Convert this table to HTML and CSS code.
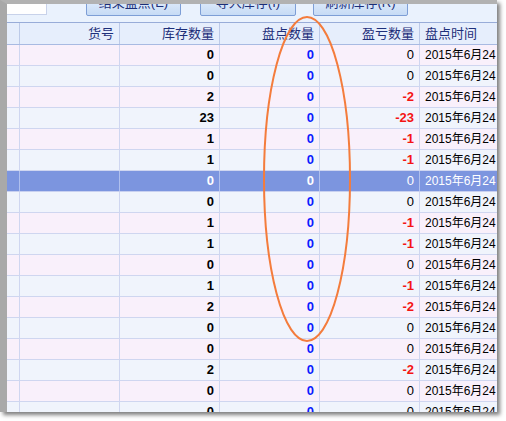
FILE: index.html
```html
<!DOCTYPE html>
<html>
<head>
<meta charset="utf-8">
<link rel="stylesheet" href="styles.css">
</head>
<body>
<div class="screen">
  <div class="win">
    <div class="toolbar">
      <div class="search"></div>
      <div class="btn b1">结束盘点(E)</div>
      <div class="btn b2">导入库存(I)</div>
      <div class="btn b3">刷新库存(R)</div>
    </div>
    <div class="grid">
      <div class="row head">
        <div class="c"></div>
        <div class="c r">货号</div>
        <div class="c r">库存数量</div>
        <div class="c r">盘点数量</div>
        <div class="c r">盈亏数量</div>
        <div class="c l">盘点时间</div>
      </div>
      <div class="row a"><div class="c"></div><div class="c"></div><div class="c r stock">0</div><div class="c r count">0</div><div class="c r diff">0</div><div class="c l date">2015年6月24日 10:12</div></div>
      <div class="row b"><div class="c"></div><div class="c"></div><div class="c r stock">0</div><div class="c r count">0</div><div class="c r diff">0</div><div class="c l date">2015年6月24日 10:12</div></div>
      <div class="row a"><div class="c"></div><div class="c"></div><div class="c r stock">2</div><div class="c r count">0</div><div class="c r diff neg">-2</div><div class="c l date">2015年6月24日 10:12</div></div>
      <div class="row b"><div class="c"></div><div class="c"></div><div class="c r stock">23</div><div class="c r count">0</div><div class="c r diff neg">-23</div><div class="c l date">2015年6月24日 10:12</div></div>
      <div class="row a"><div class="c"></div><div class="c"></div><div class="c r stock">1</div><div class="c r count">0</div><div class="c r diff neg">-1</div><div class="c l date">2015年6月24日 10:12</div></div>
      <div class="row b"><div class="c"></div><div class="c"></div><div class="c r stock">1</div><div class="c r count">0</div><div class="c r diff neg">-1</div><div class="c l date">2015年6月24日 10:12</div></div>
      <div class="row sel"><div class="c"></div><div class="c"></div><div class="c r stock">0</div><div class="c r count">0</div><div class="c r diff">0</div><div class="c l date">2015年6月24日 10:12</div></div>
      <div class="row b"><div class="c"></div><div class="c"></div><div class="c r stock">0</div><div class="c r count">0</div><div class="c r diff">0</div><div class="c l date">2015年6月24日 10:12</div></div>
      <div class="row a"><div class="c"></div><div class="c"></div><div class="c r stock">1</div><div class="c r count">0</div><div class="c r diff neg">-1</div><div class="c l date">2015年6月24日 10:12</div></div>
      <div class="row b"><div class="c"></div><div class="c"></div><div class="c r stock">1</div><div class="c r count">0</div><div class="c r diff neg">-1</div><div class="c l date">2015年6月24日 10:12</div></div>
      <div class="row a"><div class="c"></div><div class="c"></div><div class="c r stock">0</div><div class="c r count">0</div><div class="c r diff">0</div><div class="c l date">2015年6月24日 10:12</div></div>
      <div class="row b"><div class="c"></div><div class="c"></div><div class="c r stock">1</div><div class="c r count">0</div><div class="c r diff neg">-1</div><div class="c l date">2015年6月24日 10:12</div></div>
      <div class="row a"><div class="c"></div><div class="c"></div><div class="c r stock">2</div><div class="c r count">0</div><div class="c r diff neg">-2</div><div class="c l date">2015年6月24日 10:12</div></div>
      <div class="row b"><div class="c"></div><div class="c"></div><div class="c r stock">0</div><div class="c r count">0</div><div class="c r diff">0</div><div class="c l date">2015年6月24日 10:12</div></div>
      <div class="row a"><div class="c"></div><div class="c"></div><div class="c r stock">0</div><div class="c r count">0</div><div class="c r diff">0</div><div class="c l date">2015年6月24日 10:12</div></div>
      <div class="row b"><div class="c"></div><div class="c"></div><div class="c r stock">2</div><div class="c r count">0</div><div class="c r diff neg">-2</div><div class="c l date">2015年6月24日 10:12</div></div>
      <div class="row a"><div class="c"></div><div class="c"></div><div class="c r stock">0</div><div class="c r count">0</div><div class="c r diff">0</div><div class="c l date">2015年6月24日 10:12</div></div>
      <div class="row b"><div class="c"></div><div class="c"></div><div class="c r stock">0</div><div class="c r count">0</div><div class="c r diff">0</div><div class="c l date">2015年6月24日 10:12</div></div>
    </div>
    <svg class="mark" width="490" height="408" viewBox="0 0 490 408">
      <ellipse cx="300" cy="175" rx="43" ry="162" fill="none" stroke="#f47c3c" stroke-width="2"/>
    </svg>
  </div>
</div>
</body>
</html>
```

FILE: styles.css
```css
html, body {
  margin: 0;
  padding: 0;
  background: #ffffff;
}
body {
  width: 506px;
  height: 421px;
  overflow: hidden;
}
.screen {
  width: 490px;
  height: 408px;
  border-top: 4px solid #b2b2b2;
  border-left: 7px solid #a9a9a9;
  box-shadow: 3px 3px 4px rgba(0, 0, 0, 0.5);
  font-family: "Liberation Sans", "Noto Sans CJK SC", sans-serif;
  font-size: 12px;
}
.win {
  position: relative;
  width: 490px;
  height: 408px;
  overflow: hidden;
  background: #f4f0fa;
}
.toolbar {
  display: flex;
  align-items: flex-start;
  height: 18px;
  background: #eaf2fd;
  border-bottom: 1px solid #98acd8;
}
.search {
  width: 39px;
  height: 10px;
  background: #ffffff;
  border-right: 1px solid #c8d2ea;
  border-bottom: 1px solid #c8d2ea;
}
.btn {
  height: 26px;
  margin-top: -14px;
  box-sizing: border-box;
  border: 1px solid #7d9ed6;
  border-radius: 2px;
  background: linear-gradient(#eef5ff, #c6dbf5);
  color: #1c2f78;
  font-size: 13px;
  line-height: 24px;
  text-align: center;
}
.b1 { width: 95px; margin-left: 39px; }
.b2 { width: 96px; margin-left: 19px; }
.b3 { width: 95px; margin-left: 17px; }
.grid {
  display: flex;
  flex-direction: column;
}
.row {
  display: grid;
  grid-template-columns: 13px 100px 100px 100px 100px 77px;
  height: 21px;
  box-sizing: border-box;
  border-bottom: 1px solid #cfd6f0;
}
.row.a { background: #f9f0fb; }
.row.b { background: #f0f4fc; }
.row.head {
  height: 22px;
  background: #e6eefc;
  border-bottom: 1px solid #a8bae2;
  color: #1e2f7a;
  font-size: 13px;
}
.c {
  border-right: 1px solid #cfd6f0;
  white-space: nowrap;
  overflow: hidden;
  line-height: 20px;
}
.head .c { line-height: 21px; border-right-color: #bccae8; }
.c.r { text-align: right; padding-right: 5px; }
.c.l { text-align: left; padding-left: 5px; }
.c:last-child { border-right: none; }
.stock { font-weight: bold; color: #000000; font-size: 13px; }
.count { font-weight: bold; color: #0a1cff; font-size: 13px; }
.diff { color: #000000; font-size: 13px; }
.diff.neg { color: #f41414; font-weight: bold; }
.date { font-size: 12px; color: #000000; }
.row.sel { background: #7c95df; border-bottom-color: #c8d0f0; }
.row.sel .c { color: #ffffff; border-right-color: #b0c0ee; }
.mark {
  position: absolute;
  left: 0;
  top: 0;
  pointer-events: none;
}
```
